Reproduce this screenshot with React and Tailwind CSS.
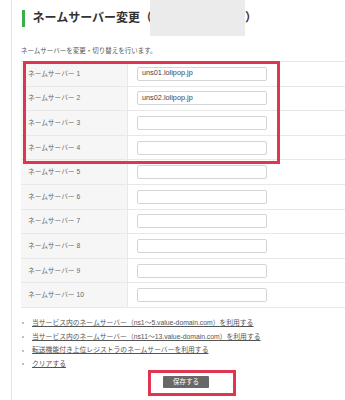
import React from "react";

const rows = [
  { n: 1, v: "uns01.lolipop.jp" },
  { n: 2, v: "uns02.lolipop.jp" },
  { n: 3, v: "" },
  { n: 4, v: "" },
  { n: 5, v: "" },
  { n: 6, v: "" },
  { n: 7, v: "" },
  { n: 8, v: "" },
  { n: 9, v: "" },
  { n: 10, v: "" },
];

const links = [
  "当サービス内のネームサーバー（ns1～5.value-domain.com）を利用する",
  "当サービス内のネームサーバー（ns11～13.value-domain.com）を利用する",
  "転送機能付き上位レジストラのネームサーバーを利用する",
  "クリアする",
];

export default function App() {
  return (
    <div className="w-[345px] h-[400px] overflow-hidden bg-white font-['Liberation_Sans','Noto_Sans_CJK_JP',sans-serif] text-[#555]">
      <div className="ml-[11px] h-full border-l border-[#e4e4e4] pl-[9px]">
        {/* header */}
        <div className="flex h-[36px] items-center">
          <div className="ml-[1px] h-[17px] w-[2.5px] bg-[#3cae48]" />
          <span className="ml-[8px] text-[12px] font-bold leading-none text-[#333] whitespace-nowrap">
            ネームサーバー変更（
          </span>
          <div className="ml-[-2px] h-full w-[95px] bg-[#ebebeb]" />
          <span className="text-[12px] font-bold leading-none text-[#333]">）</span>
        </div>

        <p className="mt-[10px] text-[6.5px] leading-[10px] text-[#555] whitespace-nowrap">
          ネームサーバーを変更・切り替えを行います。
        </p>

        {/* table */}
        <div className="relative mt-[5px] w-[330px] border-t border-[#e8e8e8]">
          {rows.map((r) => (
            <div key={r.n} className="flex h-[24.6px] border-b border-[#e8e8e8]">
              <div className="flex w-[107px] items-center border-r border-[#e8e8e8] bg-[#f6f6f6] pl-[7px] text-[6.7px] text-[#666] whitespace-nowrap">
                ネームサーバー {r.n}
              </div>
              <div className="flex flex-1 items-center pl-[9px]">
                <div className="flex h-[14px] w-[130px] items-center rounded-[2px] border border-[#d4d4d4] bg-white pl-[4px] text-[7.3px] text-[#444]">
                  {r.v}
                </div>
              </div>
            </div>
          ))}
          <div className="pointer-events-none absolute left-[2px] top-[-1px] h-[103px] w-[257px] border-[3px] border-[#e03550]" />
        </div>

        {/* links */}
        <ul className="mt-[8.6px]">
          {links.map((t) => (
            <li key={t} className="flex h-[13.7px] items-center">
              <span className="ml-[1px] h-[2px] w-[2px] rounded-full bg-[#aaa]" />
              <span className="ml-[8px] text-[6.8px] leading-none text-[#555] underline whitespace-nowrap">
                {t}
              </span>
            </li>
          ))}
        </ul>

        {/* save button */}
        <div className="relative mt-[4.5px] ml-[142px] w-[46px]">
          <div className="flex h-[12px] w-[46px] items-center justify-center rounded-[1px] bg-[#686868] text-[6.5px] leading-none text-white">
            保存する
          </div>
          <div className="pointer-events-none absolute left-[-15px] top-[-6px] h-[26px] w-[88px] border-[3px] border-[#e03550]" />
        </div>

        <div className="mt-[12px] ml-[2px] flex gap-[5px]">
          <span className="h-[1px] w-[1px] bg-[#bbb]" />
          <span className="h-[1px] w-[1px] bg-[#bbb]" />
          <span className="h-[1px] w-[1px] bg-[#bbb]" />
        </div>
      </div>
    </div>
  );
}
